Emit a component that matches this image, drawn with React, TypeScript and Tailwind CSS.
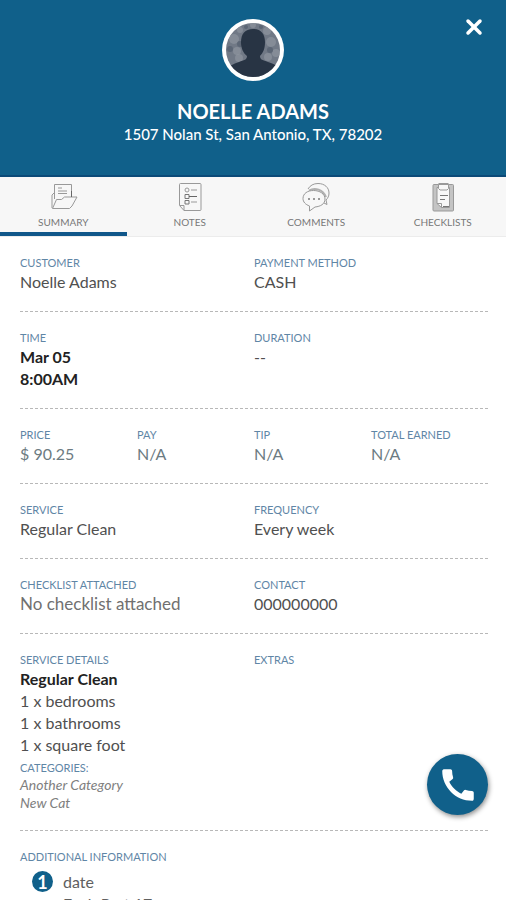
import React from 'react';
import { X } from 'lucide-react';
import { MdCall } from 'react-icons/md';

const iconClass = 'h-[30px] w-[30px] fill-none stroke-[#999]';

function SummaryIcon() {
  return (
    <svg viewBox="0 0 30 30" className={iconClass} aria-hidden="true">
      <path d="M4 26V13l3-3M6.500 17V2.500H23.500V15" />
      <path d="M10 6h4M10 9h9M10 11.500h9" />
      <path d="M4.500 26.500 8.500 17.500h5l3-2.500H29l-5 9-2.500 2.500z" fill="#f7f7f7" />
      <path d="M23.500 9v6" stroke="#666" />
    </svg>
  );
}

function NotesIcon() {
  return (
    <svg viewBox="0 0 30 30" className={iconClass} aria-hidden="true">
      <path d="M4.500 2.500q0-1 1-1h19.500q1 0 1 1v25q0 1-1 1H9l-4.500-5z" />
      <path d="M5 23.500h4v5" />
      <circle cx="12" cy="8" r="2" />
      <path d="M10 12.500h4v4h-4zM10 18.500h4v3.500h-4z" stroke="#777" />
      <path d="M16 8h6M16 20h6" />
      <path d="M14 14.500h8" stroke="#666" />
    </svg>
  );
}

function CommentsIcon() {
  return (
    <svg viewBox="0 0 30 30" className={iconClass} aria-hidden="true">
      <path d="M7 7C9 3.500 12.500 1.500 17 1.500c6.500 0 11 4 11 9.500 0 3-1 5-3 7l1 4.500-4-2" />
      <path d="M8 8.500c6-3.500 14-1 17 6.500" strokeWidth="2" stroke="#b0b0b0" />
      <path d="M12.500 8.500c6.500 0 11.500 3.500 11.500 8.500s-4.500 7.500-10 8L8.500 29v-5C4.500 22.500 2 20 2 16.500c0-5 4.500-8 10.500-8z" fill="#f7f7f7" />
      <path d="M7 17h2M12 17h2M17 17h2" strokeWidth="2" />
    </svg>
  );
}

function ChecklistsIcon() {
  return (
    <svg viewBox="0 0 30 30" className={iconClass} aria-hidden="true">
      <rect x="5" y="2.500" width="20.500" height="26.500" rx="1" fill="#c4c4c4" />
      <path d="M9 5.500h12.500V25.500H13.500L9 21.500z" fill="#f7f7f7" />
      <path d="M10.500 6.500V2.500h10v4l-1.500 1.500h-7z" fill="#f7f7f7" />
      <path d="M10.500 1.500h10" />
      <path d="M12 13.500h8M12 17.500h5M15 24.500h6" stroke="#777" />
      <path d="M9 21.500h4.500v4" />
    </svg>
  );
}

const tabs = [
  { label: 'SUMMARY', icon: SummaryIcon },
  { label: 'NOTES', icon: NotesIcon },
  { label: 'COMMENTS', icon: CommentsIcon },
  { label: 'CHECKLISTS', icon: ChecklistsIcon },
];

function Avatar() {
  return (
    <svg viewBox="0 0 62 62" className="h-[62px] w-[62px]" role="img" aria-label="Noelle Adams">
      <defs>
        <clipPath id="avatar-clip">
          <circle cx="31" cy="31" r="27" />
        </clipPath>
      </defs>
      <circle cx="31" cy="31" r="31" fill="#fff" />
      <g clipPath="url(#avatar-clip)">
        <rect width="62" height="62" fill="#717986" />
        <g fill="#9299a4" fillOpacity="0.600">
          <circle cx="12" cy="20" r="5" />
          <circle cx="18" cy="11" r="3" />
          <circle cx="31" cy="6" r="3" />
          <circle cx="45" cy="12" r="4" />
          <circle cx="49" cy="23" r="5" />
          <circle cx="15" cy="32" r="4" />
          <circle cx="54" cy="34" r="4" />
          <circle cx="17" cy="39" r="4" />
          <circle cx="46" cy="38" r="4" />
        </g>
        <g fill="#5c6675">
          <circle cx="18" cy="25" r="3" />
          <circle cx="8" cy="30" r="3" />
          <circle cx="48" cy="31" r="3" />
          <circle cx="24" cy="8" r="2" />
          <circle cx="39" cy="8" r="2" />
        </g>
        <path
          d="M31 10c8 0 12 5 12 13 0 7-2 11-5 14 0 4 3 4 8 6 6 2 10 4 12 8v11H4V51c3-4 7-6 13-8 5-2 8-2 8-6-4-3-6-8-6-14 0-8 4-13 12-13z"
          fill="#283444"
        />
      </g>
    </svg>
  );
}

interface FieldProps {
  label: string;
  children?: React.ReactNode;
  className?: string;
}

function Field({ label, children, className = 'text-base text-[#505050]' }: FieldProps) {
  return (
    <div>
      <dt className="text-[11px] leading-4 text-[#5f86a6]">{label}</dt>
      <dd className={`leading-[22px] ${className}`}>{children}</dd>
    </div>
  );
}

function Row({ cols = 2, children }: { cols?: 2 | 4; children: React.ReactNode }) {
  return (
    <dl
      className={`grid border-b border-dashed border-[#b8b8b8] pt-[18px] pb-[18px] ${
        cols === 4 ? 'grid-cols-4' : 'grid-cols-2'
      }`}
    >
      {children}
    </dl>
  );
}

export default function App() {
  return (
    <div className="flex h-screen flex-col bg-white font-[Lato,sans-serif]">
      <header className="relative flex shrink-0 flex-col items-center border-b-2 border-[#0b4a78] bg-[#10608a] px-5 pt-[19px] pb-[30px] text-white">
        <Avatar />
        <h1 className="mt-[18px] text-xl leading-6 font-bold">NOELLE ADAMS</h1>
        <p className="text-[15px] leading-[22px] font-medium">1507 Nolan St, San Antonio, TX, 78202</p>
        <button type="button" aria-label="Close" className="absolute top-[15px] right-5">
          <X className="h-6 w-6" strokeWidth={3.5} />
        </button>
      </header>

      <nav className="grid shrink-0 grid-cols-4 border-b border-[#ececec] bg-[#f7f7f7]">
        {tabs.map(({ label, icon: Icon }, i) => (
          <button
            key={label}
            type="button"
            className={`flex flex-col items-center border-b-4 pt-[5px] pb-[2px] text-[10px] leading-4 text-[#777] ${
              i === 0 ? 'border-[#10578a]' : 'border-transparent'
            }`}
          >
            <Icon />
            <span className="pt-[2px]">{label}</span>
          </button>
        ))}
      </nav>

      <main className="flex-1 overflow-y-auto pr-[18px] pl-5 [scrollbar-width:none]">
        <Row>
          <Field label="CUSTOMER">Noelle Adams</Field>
          <Field label="PAYMENT METHOD">CASH</Field>
        </Row>
        <Row>
          <Field label="TIME" className="text-base font-bold text-[#222]">
            Mar 05
            <br />
            8:00AM
          </Field>
          <Field label="DURATION">--</Field>
        </Row>
        <Row cols={4}>
          <Field label="PRICE" className="text-base text-[#6c7b82]">$ 90.25</Field>
          <Field label="PAY" className="text-base text-[#6c7b82]">N/A</Field>
          <Field label="TIP" className="text-base text-[#6c7b82]">N/A</Field>
          <Field label="TOTAL EARNED" className="text-base text-[#6c7b82]">N/A</Field>
        </Row>
        <Row>
          <Field label="SERVICE">Regular Clean</Field>
          <Field label="FREQUENCY">Every week</Field>
        </Row>
        <Row>
          <Field label="CHECKLIST ATTACHED" className="text-[17px] text-[#707070]">No checklist attached</Field>
          <Field label="CONTACT">000000000</Field>
        </Row>
        <Row>
          <div>
            <Field label="SERVICE DETAILS">
              <strong className="text-[#222]">Regular Clean</strong>
              <br />
              1 x bedrooms
              <br />
              1 x bathrooms
              <br />
              1 x square foot
            </Field>
            <div className="mt-1">
              <dt className="text-[11px] leading-4 text-[#5f86a6]">CATEGORIES:</dt>
              <dd className="text-sm leading-[18px] text-[#808080] italic">
                Another Category
                <br />
                New Cat
              </dd>
            </div>
          </div>
          <Field label="EXTRAS" />
        </Row>
        <section className="pt-[18px] pb-5">
          <h2 className="text-[11px] leading-4 text-[#5f86a6]">ADDITIONAL INFORMATION</h2>
          <div className="mt-1 flex gap-[10px] pl-3">
            <span className="mt-[2px] flex h-[21px] w-[21px] items-center justify-center rounded-full bg-[#10608a] text-lg leading-none font-bold text-white">
              1
            </span>
            <p className="pt-[2px] text-base leading-[22px] text-[#606060]">
              date
              <br />
              Each Part 17
            </p>
          </div>
        </section>
      </main>

      <button
        type="button"
        aria-label="Call customer"
        className="fixed right-[18px] bottom-[85px] flex h-[61px] w-[61px] items-center justify-center rounded-full bg-[#10608a] text-white shadow-[1px_2px_5px_rgba(0,0,0,0.45)]"
      >
        <MdCall className="h-[42px] w-[42px]" />
      </button>
    </div>
  );
}
